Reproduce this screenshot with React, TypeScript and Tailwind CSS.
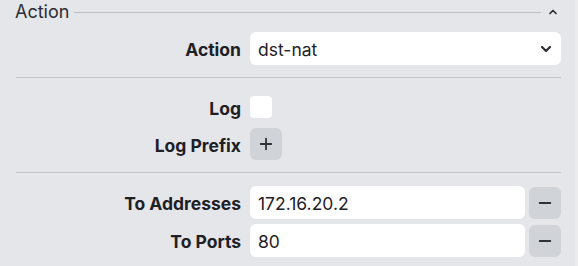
import { ChevronDown, ChevronUp, Plus, Minus } from "lucide-react";

const Label = ({ text }: { text: string }) => (
    <div className="flex items-center justify-end pt-[4px] text-[17.5px] font-bold text-[#1d2025]">{text}</div>
);

const Divider = () => <div className="h-px bg-[#c3c5c9]" />;

const App = () => {
    return (
        <div
            className="w-[578px] h-[266px] overflow-hidden bg-[#e5e6e9] flex"
            style={{ fontFamily: "Inter, 'Noto Sans', sans-serif" }}
        >
            <div className="flex-1 flex flex-col pl-4 pr-[14px]">
                <div className="h-[24px] flex items-center -ml-px">
                    <span className="text-[18px] text-[#2a2d33] leading-none pb-[1px]">Action</span>
                    <div className="flex-1 h-px bg-[#bcbec2] ml-[5px] mr-[6px]" />
                    <ChevronUp size={12} strokeWidth={3.5} className="text-[#2a2d33] mr-[2px]" />
                </div>

                <div className="pt-2 pb-3 grid grid-cols-[225px_1fr] gap-x-[9px]">
                    <Label text="Action" />
                    <div className="h-[33px] bg-white rounded-md flex items-center justify-between pl-2 pr-[7px]">
                        <span className="pt-[3px] text-[17.5px] text-[#1f2227]">dst-nat</span>
                        <ChevronDown size={16} strokeWidth={3.2} className="text-[#2a2d33]" />
                    </div>
                </div>

                <Divider />

                <div className="pt-[13px] pb-3 grid grid-cols-[225px_1fr] gap-x-[9px] gap-y-[5px]">
                    <Label text="Log" />
                    <div className="h-8 flex items-center">
                        <div className="w-[22px] h-[22px] bg-white rounded-[4px]" />
                    </div>
                    <Label text="Log Prefix" />
                    <div className="h-8 flex items-center">
                        <button className="w-8 h-8 rounded-md bg-[#d0d3d7] flex items-center justify-center text-[#2f3339]">
                            <Plus size={18} strokeWidth={2.4} />
                        </button>
                    </div>
                </div>

                <Divider />

                <div className="pt-[13px] grid grid-cols-[225px_1fr] gap-x-[9px] gap-y-[5px]">
                    <Label text="To Addresses" />
                    <div className="flex items-center gap-1">
                        <div className="flex-1 h-[33px] bg-white rounded-md flex items-center pl-2 pt-[3px] text-[17.5px] text-[#1f2227]">
                            172.16.20.2
                        </div>
                        <button className="w-8 h-8 rounded-md bg-[#d0d3d7] flex items-center justify-center text-[#2f3339]">
                            <Minus size={18} strokeWidth={2.6} />
                        </button>
                    </div>
                    <Label text="To Ports" />
                    <div className="flex items-center gap-1">
                        <div className="flex-1 h-[33px] bg-white rounded-md flex items-center pl-2 pt-[3px] text-[17.5px] text-[#1f2227]">
                            80
                        </div>
                        <button className="w-8 h-8 rounded-md bg-[#d0d3d7] flex items-center justify-center text-[#2f3339]">
                            <Minus size={18} strokeWidth={2.6} />
                        </button>
                    </div>
                </div>
            </div>
            <div className="w-[3px] bg-[#ececee]" />
        </div>
    );
};

export default App;
